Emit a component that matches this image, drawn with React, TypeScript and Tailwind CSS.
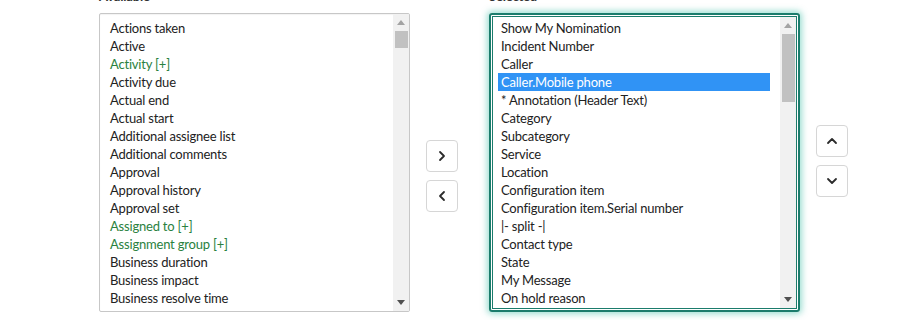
import React from 'react';

type Item = { label: string; green?: boolean };

const available: Item[] = [
  { label: 'Actions taken' },
  { label: 'Active' },
  { label: 'Activity [+]', green: true },
  { label: 'Activity due' },
  { label: 'Actual end' },
  { label: 'Actual start' },
  { label: 'Additional assignee list' },
  { label: 'Additional comments' },
  { label: 'Approval' },
  { label: 'Approval history' },
  { label: 'Approval set' },
  { label: 'Assigned to [+]', green: true },
  { label: 'Assignment group [+]', green: true },
  { label: 'Business duration' },
  { label: 'Business impact' },
  { label: 'Business resolve time' },
  { label: 'Business service' },
];

const selected: string[] = [
  'Show My Nomination',
  'Incident Number',
  'Caller',
  'Caller.Mobile phone',
  '* Annotation (Header Text)',
  'Category',
  'Subcategory',
  'Service',
  'Location',
  'Configuration item',
  'Configuration item.Serial number',
  '|- split -|',
  'Contact type',
  'State',
  'My Message',
  'On hold reason',
  'Opened by',
];

const Scrollbar: React.FC<{ thumb: string }> = ({ thumb }) => (
  <div className="w-[16px] h-full bg-[#f1f1f1] flex flex-col items-center shrink-0">
    <div className="h-[17px] w-full flex items-center justify-center">
      <svg width="8" height="5" viewBox="0 0 8 5">
        <path d="M0 5 L4 0 L8 5 Z" fill="#a3a3a3" />
      </svg>
    </div>
    <div className={`w-[13px] bg-[#c1c1c1] ${thumb}`} />
    <div className="flex-1" />
    <div className="h-[17px] w-full flex items-center justify-center">
      <svg width="8" height="5" viewBox="0 0 8 5">
        <path d="M0 0 L4 5 L8 0 Z" fill="#505050" />
      </svg>
    </div>
  </div>
);

const IconButton: React.FC<{ d: string }> = ({ d }) => (
  <button className="w-[32px] h-[32px] rounded-[4px] border border-[#d6d6d6] bg-white flex items-center justify-center">
    <svg width="14" height="14" viewBox="0 0 14 14" fill="none">
      <path d={d} stroke="#2b2b2b" strokeWidth="1.8" strokeLinecap="round" strokeLinejoin="round" />
    </svg>
  </button>
);

const App: React.FC = () => {
  return (
    <div className="w-[906px] h-[320px] overflow-hidden bg-white font-['Lato',sans-serif] text-[13px] tracking-[-0.2px] text-[#222]">
      <div className="flex items-start pl-[99px] -mt-[13px]">
        {/* Available list */}
        <div className="w-[311px] shrink-0">
          <div className="h-[26px] leading-[18px] font-bold text-[#333]">Available</div>
          <div className="h-[299px] border border-[#c7c7c7] rounded-[2px] flex overflow-hidden shadow-[inset_0_1px_1px_rgba(0,0,0,0.05)]">
            <ul className="flex-1 pt-[5px] pl-[8px] overflow-hidden">
              {available.map((item) => (
                <li
                  key={item.label}
                  className={`h-[18px] leading-[18px] px-[2px] whitespace-nowrap ${item.green ? 'text-[#2a8140]' : ''}`}
                >
                  {item.label}
                </li>
              ))}
            </ul>
            <Scrollbar thumb="h-[17px]" />
          </div>
        </div>

        {/* Move buttons */}
        <div className="w-[79px] shrink-0 flex flex-col items-start pl-[16px] pt-[153px] gap-[8px]">
          <IconButton d="M5 3 L9 7 L5 11" />
          <IconButton d="M9 3 L5 7 L9 11" />
        </div>

        {/* Selected list */}
        <div className="w-[311px] shrink-0">
          <div className="h-[26px] leading-[18px] font-bold text-[#333]">Selected</div>
          <div className="h-[299px] rounded-[3px] border-2 border-[#1b7c6c] p-[1px] shadow-[0_0_6px_2px_rgba(60,190,165,0.5)]">
            <div className="h-full border border-[#1b7c6c] flex overflow-hidden bg-white">
              <ul className="flex-1 pt-[2px] pl-[5px] pr-[10px] overflow-hidden">
                {selected.map((label) => (
                  <li
                    key={label}
                    className={`h-[18px] leading-[18px] px-[3px] whitespace-nowrap ${
                      label === 'Caller.Mobile phone' ? 'bg-[#3093f5] text-white' : ''
                    }`}
                  >
                    {label}
                  </li>
                ))}
              </ul>
              <Scrollbar thumb="h-[68px]" />
            </div>
          </div>
        </div>

        {/* Order buttons */}
        <div className="shrink-0 flex flex-col pl-[16px] pt-[138px] gap-[8px]">
          <IconButton d="M3 9 L7 5 L11 9" />
          <IconButton d="M3 5 L7 9 L11 5" />
        </div>
      </div>
    </div>
  );
};

export default App;
